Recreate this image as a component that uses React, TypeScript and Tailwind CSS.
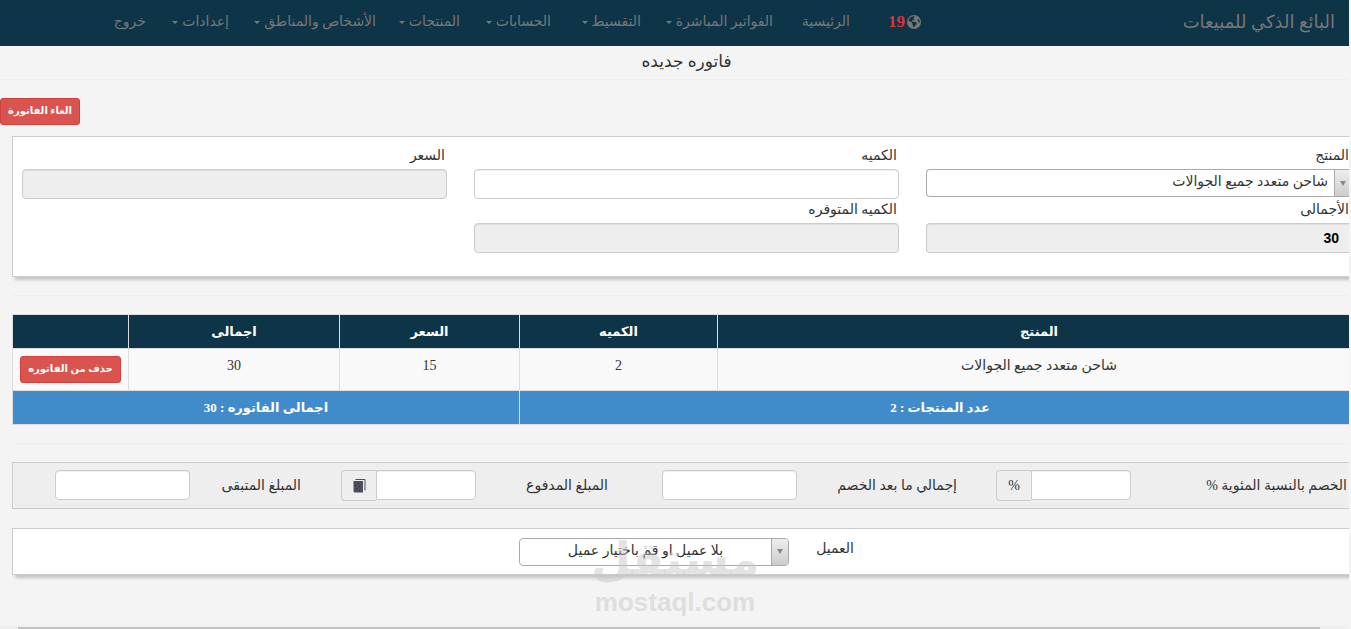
import React from "react";
import { FaEarthAmericas } from "react-icons/fa6";

const SERIF = "font-['Liberation_Serif','DejaVu_Sans',serif]";

type MenuItem = { label: string; caret: boolean; width: string };

const menu: MenuItem[] = [
  { label: "الرئيسية", caret: false, width: "w-[77px]" },
  { label: "الفواتير المباشرة", caret: true, width: "w-[132px]" },
  { label: "التقسيط", caret: true, width: "w-[90px]" },
  { label: "الحسابات", caret: true, width: "w-[91px]" },
  { label: "المنتجات", caret: true, width: "w-[84px]" },
  { label: "الأشخاص والمناطق", caret: true, width: "w-[147px]" },
  { label: "إعدادات", caret: true, width: "w-[83px]" },
  { label: "خروج", caret: false, width: "w-[30px]" },
];

function Caret() {
  return (
    <svg width="6" height="3" viewBox="0 0 6 3" className="fill-[#777] shrink-0" aria-hidden="true">
      <path d="M0 0h6L3 3z" />
    </svg>
  );
}

function BookIcon() {
  return (
    <svg width="14" height="14" viewBox="0 0 14 14" aria-hidden="true">
      <path d="M3.500 .5H13V11.500" fill="none" stroke="#4b4e5c" />
      <path d="M2 2h9v11.500H2.500L1.500 12.500V1.500z" fill="#4b4e5c" />
      <g fill="#26262c">
        <rect x="6" y="4" width="1" height="1" />
        <rect x="3" y="6" width="1" height="1" />
        <rect x="7" y="7" width="1" height="1" />
        <rect x="4" y="9" width="1" height="1" />
        <rect x="7" y="11" width="1" height="1" />
      </g>
    </svg>
  );
}

function SelectBox(props: { id: string; option: string; center?: boolean; flush?: boolean }) {
  return (
    <div
      className={
        "flex h-7 w-full overflow-hidden border border-[#aaa] bg-white " +
        (props.flush ? "rounded-l border-r-0" : "rounded")
      }
    >
      <span className="flex w-[17px] shrink-0 items-center justify-center border-l border-[#aaa] bg-linear-to-t from-[#ccc] to-[#eee]">
        <svg width="6" height="5" viewBox="0 0 6 5" aria-hidden="true">
          <path d="M0 0h6L3 5z" fill="#888" />
        </svg>
      </span>
      <select
        id={props.id}
        className={
          "min-w-0 flex-1 appearance-none bg-transparent pb-0.5 text-sm leading-6 text-[#333] outline-none " +
          (props.center ? "text-center" : "pr-1.5 text-right")
        }
      >
        <option>{props.option}</option>
      </select>
    </div>
  );
}

const inputBase =
  "h-[30px] w-full min-w-0 rounded border border-[#ccc] px-2.5 inset-shadow-[0_1px_1px_rgba(0,0,0,0.075)] outline-none";

function Field(props: { id: string; label: string; children: React.ReactNode }) {
  return (
    <div className="flex min-w-0 flex-col">
      <label htmlFor={props.id} className="h-6 pr-0.5 text-sm leading-[22px]">
        {props.label}
      </label>
      {props.children}
    </div>
  );
}

function AddonInput(props: { id: string; children: React.ReactNode }) {
  return (
    <div className="flex w-[135px]">
      <input
        id={props.id}
        className="h-[30px] min-w-0 flex-1 rounded-r border border-[#ccc] bg-white px-2.5 inset-shadow-[0_1px_1px_rgba(0,0,0,0.075)] outline-none"
      />
      <span className="flex h-[31px] w-[35px] items-center justify-center rounded-l border border-r-0 border-[#ccc] bg-[#eee] text-sm">
        {props.children}
      </span>
    </div>
  );
}

const rule = "border-t border-[#eee]";
const panelShadow = "shadow-[3px_3px_3px_#c4c4c4]";
const dangerButton =
  "h-[27px] rounded-[3px] border border-[#d43f3a] bg-[#d9534f] pb-0.5 text-[10px] leading-4 font-bold text-white";

export default function App() {
  return (
    <div
      dir="rtl"
      className={"relative flex min-h-screen flex-col overflow-hidden bg-[#f4f4f4] pr-0.5 text-[#333] " + SERIF}
    >
      <header className="flex h-[46px] items-center bg-[#0e3448] pr-3.5 pb-0.5 text-[#777]">
        <a href="#home" className="w-[414px] shrink-0 text-lg leading-6">
          البائع الذكي للمبيعات
        </a>
        <a href="#alerts" className="flex w-[71px] shrink-0 items-center gap-0.5">
          <FaEarthAmericas size={14} />
          <span className="text-[17px] leading-6 font-bold text-[#dd3333]">19</span>
        </a>
        <nav className="flex">
          {menu.map((item) => (
            <a
              key={item.label}
              href="#menu"
              className={"flex shrink-0 items-center gap-1 text-sm leading-6 whitespace-nowrap " + item.width}
            >
              {item.label}
              {item.caret && <Caret />}
            </a>
          ))}
        </nav>
      </header>

      <h1 className="h-[33px] pt-1 pl-6 text-center text-[17px] leading-6">فاتوره جديده</h1>
      <div className={rule} />

      <div className="flex justify-end pt-[18px]">
        <button className={"w-20 " + dangerButton}>الغاء الفاتورة</button>
      </div>

      <main className="overflow-hidden pt-[11px] pb-4 pl-3">
        <section
          className={
            "-mr-0.5 grid grid-cols-3 gap-x-[27px] border border-r-0 border-[#ccc] bg-white pt-2 pb-[23px] pl-[9px] " +
            panelShadow
          }
        >
          <Field id="product" label="المنتج">
            <SelectBox id="product" option="شاحن متعدد جميع الجوالات" flush />
          </Field>
          <Field id="quantity" label="الكميه">
            <input id="quantity" className={inputBase + " bg-white"} />
          </Field>
          <Field id="price" label="السعر">
            <input id="price" readOnly className={inputBase + " bg-[#eee]"} />
          </Field>
          <Field id="total" label="الأجمالى">
            <input
              id="total"
              readOnly
              defaultValue="30"
              className={
                inputBase +
                " rounded-r-none border-r-0 bg-[#eee] pr-3 font-['Liberation_Sans',sans-serif] text-sm font-bold text-black"
              }
            />
          </Field>
          <Field id="available" label="الكميه المتوفره">
            <input id="available" readOnly className={inputBase + " bg-[#eee]"} />
          </Field>
        </section>

        <div className={"mt-[18px] " + rule} />

        <table className="mt-[18px] -mr-3 w-[calc(100%+12px)] table-fixed border-collapse text-center text-sm leading-5">
          <colgroup>
            <col />
            <col className="w-[198px]" />
            <col className="w-[180px]" />
            <col className="w-[211px]" />
            <col className="w-[116px]" />
          </colgroup>
          <thead>
            <tr className="h-[34px] bg-[#0e3448] text-[13px] text-white">
              {["المنتج", "الكميه", "السعر", "اجمالى", ""].map((title, i) => (
                <th key={i} className="border border-[#ddd] font-bold">
                  {title}
                </th>
              ))}
            </tr>
          </thead>
          <tbody>
            <tr className="h-[42px] bg-[#f9f9f9] align-top">
              {["شاحن متعدد جميع الجوالات", "2", "15", "30"].map((value, i) => (
                <td key={i} className="border border-[#ddd] pt-[7px]">
                  {value}
                </td>
              ))}
              <td className="border border-[#ddd] pt-[7px]">
                <button className={"w-[101px] " + dangerButton}>حذف من الفاتوره</button>
              </td>
            </tr>
            <tr className="h-[34px] bg-[#428bca] text-[13px] font-bold text-white">
              <td colSpan={2} className="border border-[#ddd]">
                عدد المنتجات : 2
              </td>
              <td colSpan={3} className="border border-[#ddd]">
                اجمالى الفاتوره : 30
              </td>
            </tr>
          </tbody>
        </table>

        <div className={"mt-[18px] " + rule} />

        <section className="mt-[18px] grid h-[47px] grid-cols-[216fr_174fr_160fr_189fr_132fr_175fr_111fr_135fr] items-start border border-r-0 border-[#ccc] bg-[#eee] pt-[7px] pr-0.5 pl-[42px] text-sm leading-8">
          <label htmlFor="discount">الخصم بالنسبة المئوية %</label>
          <AddonInput id="discount">%</AddonInput>
          <label htmlFor="after">إجمالي ما بعد الخصم</label>
          <div className="flex w-[135px]">
            <input id="after" className={inputBase + " bg-white"} />
          </div>
          <label htmlFor="paid">المبلغ المدفوع</label>
          <AddonInput id="paid">
            <BookIcon />
          </AddonInput>
          <label htmlFor="rest">المبلغ المتبقى</label>
          <div className="flex w-[135px]">
            <input id="rest" className={inputBase + " bg-white"} />
          </div>
        </section>

        <section
          className={
            "mt-[19px] -mr-0.5 flex h-[47px] items-center border border-r-0 border-[#ccc] bg-white pr-[497px] " +
            panelShadow
          }
        >
          <label htmlFor="customer" className="w-[65px] shrink-0 pb-1.5 text-sm leading-5">
            العميل
          </label>
          <div className="w-[270px]">
            <SelectBox id="customer" option="بلا عميل او قم باختيار عميل" center />
          </div>
        </section>
      </main>

      <div className="pointer-events-none absolute top-[532px] left-[593px] flex w-[164px] flex-col items-center text-[#c8c8c8]/50">
        <span className="font-['DejaVu_Sans',sans-serif] text-[46px] leading-[54px] font-bold">مستقل</span>
        <span dir="ltr" className="font-['Liberation_Sans',sans-serif] text-[26px] leading-8 font-bold">
          mostaql.com
        </span>
      </div>

      <div className="mt-auto h-1 bg-[#f0f0f0] pt-0.5 pr-[29px] pl-[18px]">
        <div className="h-0.5 bg-[#c1c1c1]" />
      </div>
    </div>
  );
}
